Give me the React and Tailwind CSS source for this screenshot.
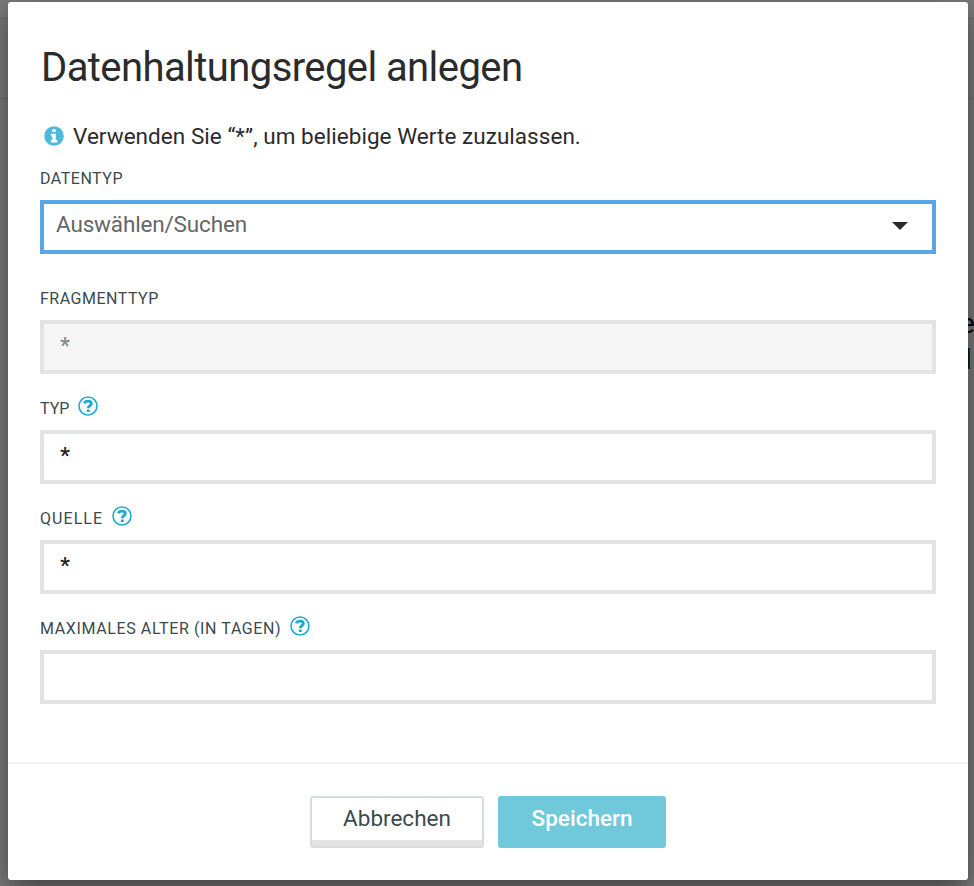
function InfoIcon() {
  return (
    <svg viewBox="0 0 20 20" className="h-5 w-5 shrink-0">
      <circle cx="10" cy="10" r="9.8" fill="#4fb9db" />
      <path
        d="M8.3 3.3h3.4v2.8H8.3zM6.9 7.8h4.9v6.2h1.4v2.4H6.9V14h1.4v-3.8H6.9z"
        fill="#fff"
      />
    </svg>
  );
}

function HelpIcon() {
  return (
    <svg viewBox="0 0 20 20" className="h-5 w-5 shrink-0" fill="none" stroke="#1fabcb">
      <circle cx="10" cy="10" r="9" strokeWidth="1.6" />
      <path d="M6.3 7.2C6.9 5.8 8.2 5.1 10 5.1c2.1 0 3.3 1 3.3 2.5 0 2.1-3 2-3 4.6" strokeWidth="2.9" />
      <rect x="8.8" y="13.4" width="3" height="2.6" rx="0.5" fill="#1fabcb" stroke="none" />
    </svg>
  );
}

function Field({ label, spacing, help, value, disabled, className = "" }) {
  return (
    <div className={`flex flex-col ${className}`}>
      <div className="flex h-6 items-start gap-[9px] text-[#3b4a4c]">
        <span className={`pt-px text-[16px] leading-6 ${spacing}`}>{label}</span>
        {help && <HelpIcon />}
      </div>
      <div
        className={`mt-[10px] flex h-[54px] items-start border-4 border-[#e1e3e4] px-4 pt-2 text-[22.5px] font-medium leading-[26px] ${
          disabled ? "bg-[#f6f6f6] text-[#808a8b]" : "bg-white text-[#222]"
        }`}
      >
        {value}
      </div>
    </div>
  );
}

export default function App() {
  return (
    <div className="relative h-[886px] w-[974px] overflow-hidden bg-[#7c7c7c] px-2 pt-[2px] font-['Roboto',sans-serif] text-[#2b2b2b]">
      <div className="absolute inset-x-0 top-[18px] h-[81px] border-y border-[#6c6c6c]" />
      <div className="absolute left-[960px] top-[306px] text-[28px] leading-9 text-black">
        <div>e</div>
        <div className="pl-[5px] text-[#08182a]">l</div>
      </div>
      <div className="relative flex h-[878px] w-[960px] flex-col rounded-[3px] bg-white shadow-[0_10px_30px_rgba(0,0,0,0.5)]">
        <div className="flex h-[762px] flex-col border-b-2 border-[#f2f2f2] px-8 pt-[42px]">
          <h1 className="h-12 pl-px text-[40px] leading-[48px] tracking-[-0.58px]">
            Datenhaltungsregel anlegen
          </h1>
          <div className="mt-[30px] flex h-7 items-center pl-1">
            <InfoIcon />
            <span className="pl-[9px] text-[22.5px] leading-7 tracking-[0.04px]">
              Verwenden Sie “*”, um beliebige Werte zuzulassen.
            </span>
          </div>
          <div className="mt-[17px] h-6 text-[16px] leading-6 tracking-[0.5px] text-[#3b4a4c]">DATENTYP</div>
          <div className="mt-[9px] flex h-[54px] items-start justify-between border-4 border-[#5aa5e6] pl-3 pr-6 pt-[7px]">
            <span className="text-[22.5px] leading-[26px] tracking-[-0.16px] text-[#666]">Auswählen/Suchen</span>
            <svg viewBox="0 0 16 8" className="mt-[11px] h-2 w-4 fill-[#2b2b2b]">
              <path d="M0 0h16L8 8z" />
            </svg>
          </div>
          <Field label="FRAGMENTTYP" spacing="tracking-[0.5px]" value="*" disabled className="mt-8" />
          <Field label="TYP" spacing="tracking-[0px]" value="*" help className="mt-[22px]" />
          <Field label="QUELLE" spacing="tracking-[1.05px]" value="*" help className="mt-[22px]" />
          <Field label="MAXIMALES ALTER (IN TAGEN)" spacing="tracking-[0.62px]" help className="mt-[22px]" />
        </div>
        <div className="flex justify-center gap-[14px] pt-8">
          <button className="flex h-[52px] w-[174px] justify-center rounded-[3px] border-2 border-[#d7dddd] pt-[7px] text-[22.5px] leading-[26px] text-[#3b4a4c] shadow-[inset_0_-6px_0_#e4e4e4]">
            Abbrechen
          </button>
          <button className="flex h-[52px] w-[168px] justify-center rounded-[3px] bg-[#70c8db] pt-[9px] text-[22.5px] font-medium leading-[26px] text-white">
            Speichern
          </button>
        </div>
      </div>
    </div>
  );
}
